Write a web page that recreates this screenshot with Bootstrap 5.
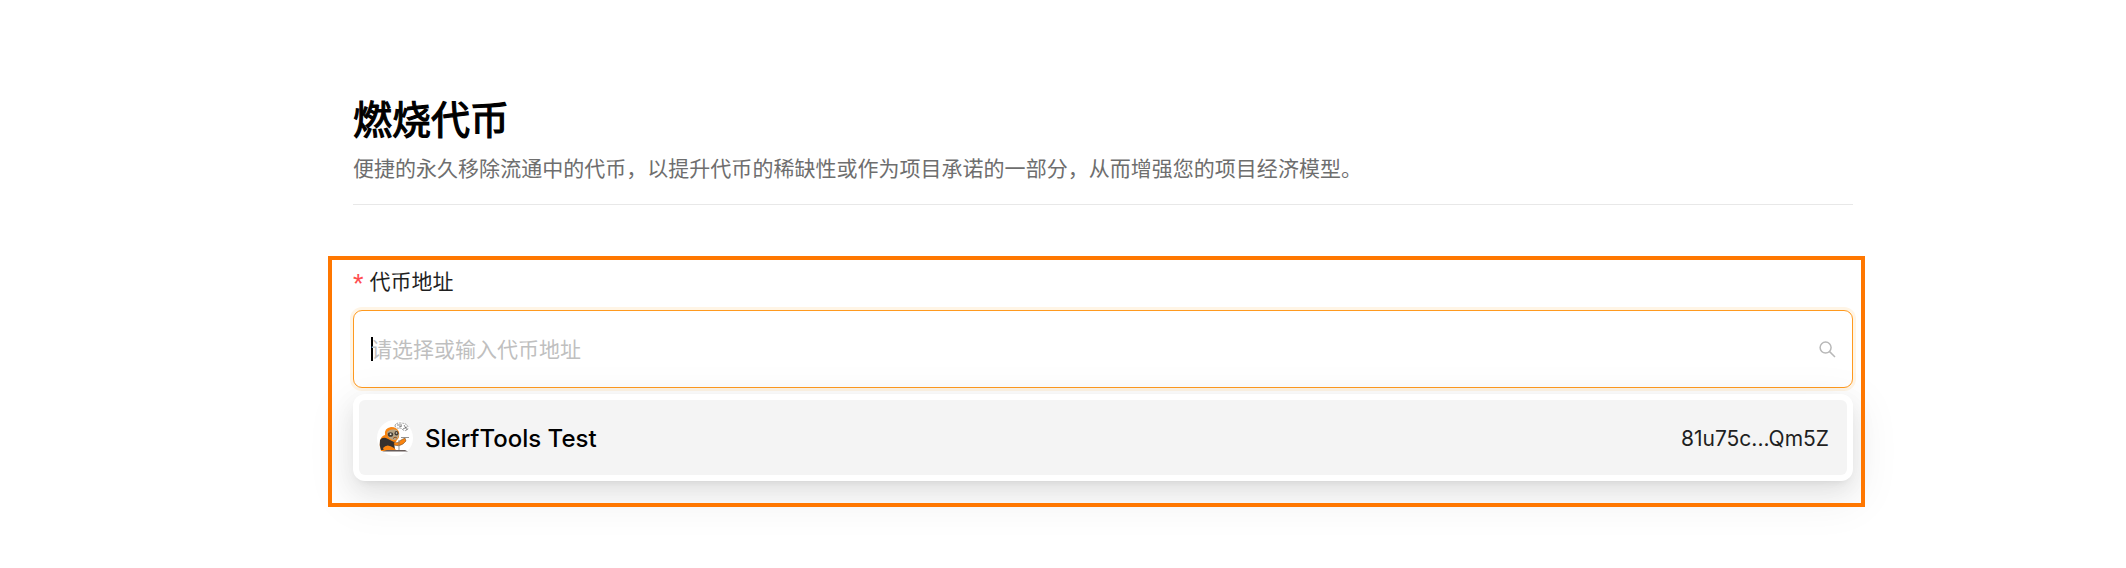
<!DOCTYPE html>
<html lang="zh-CN">
<head>
<meta charset="utf-8">
<meta name="viewport" content="width=device-width, initial-scale=1">
<title>燃烧代币</title>
<link href="https://cdn.jsdelivr.net/npm/bootstrap@5.3.0/dist/css/bootstrap.min.css" rel="stylesheet">
<style>
body { font-family: Inter, "Noto Sans CJK SC", sans-serif; font-size: 21px; line-height: 33px; color: #1f1f1f; background: #fff; height: 568px; overflow: hidden; }
.burn-page { width: 1500px; margin-left: 353px; padding-top: 92px; }
.burn-title { font-size: 39px; line-height: 56px; font-weight: 400; -webkit-text-stroke: 1.2px #000; color: #000; }
.burn-desc { color: #6e6e6e; margin-top: 4px; letter-spacing: .02px; white-space: nowrap; }
.burn-rule { height: 1px; background: #e8e8e8; margin-top: 19px; }
.burn-frame { margin: 51px -12px 0 -25px; padding: 9px 12px 26px 25px; height: 251px; }
.burn-frame::after { content: ""; position: absolute; inset: 0; border: 4px solid #ff7700; pointer-events: none; z-index: 3; }
.burn-label { gap: 6px; height: 33px; }
.burn-star { color: #ff4d4f; font-family: "Liberation Sans", sans-serif; font-size: 27px; padding-top: 6px; }
.token-input { height: 78px; margin-top: 12px; border: 1px solid #ff9a1f; border-radius: 9px; background: #fff; box-shadow: 0 0 0 3px #fff5e6; padding: 0 16px 0 17px; color: #bfbfbf; }
.token-caret { width: 2px; height: 24px; background: #000; margin-right: -2px; }
.token-menu { margin-top: 6px; height: 87px; padding: 6px; border-radius: 12px; background: #fff; box-shadow: 0 9px 24px rgba(0,0,0,.08), 0 4.5px 9px -6px rgba(0,0,0,.12), 0 13.5px 42px 12px rgba(0,0,0,.05); }
.token-option { height: 75px; border-radius: 6px; background: #f4f4f4; padding: 0 18px; }
.token-name { font-size: 24px; font-weight: 500; color: #000; margin-left: 12px; padding-top: 1px; }
.token-addr { padding-top: 2px; }
</style>
</head>
<body>
<main class="burn-page">
  <h1 class="burn-title mb-0">燃烧代币</h1>
  <p class="burn-desc mb-0">便捷的永久移除流通中的代币，以提升代币的稀缺性或作为项目承诺的一部分，从而增强您的项目经济模型。</p>
  <div class="burn-rule"></div>
  <section class="burn-frame position-relative">
    <div class="burn-label d-flex align-items-center"><span class="burn-star">*</span><span>代币地址</span></div>
    <div class="token-input d-flex align-items-center">
      <span class="token-caret"></span>
      <span class="flex-grow-1">请选择或输入代币地址</span>
      <svg width="17" height="17" viewBox="0 0 17 17" fill="none" stroke="#b8b8b8" stroke-width="1.5"><circle cx="6.6" cy="6.6" r="5.5"/><path d="M10.6 10.6 16 16"/></svg>
    </div>
    <div class="token-menu position-relative">
      <div class="token-option d-flex align-items-center">
        <svg width="36" height="36" viewBox="0 0 36 36">
          <circle cx="18" cy="18" r="18" fill="#fff"/>
          <path d="M3 21Q4 16 8 15Q7 8 14 7Q20 7 22 12Q23 17 20 20L16 26L17 31H4Q2 26 3 21Z" fill="#f98410"/>
          <path d="M3 20Q6 16 11 19L17 22L18 30H4Q2 25 3 20Z" fill="#34302e"/>
          <path d="M6 28Q10 23 17 28L20 31H7Z" fill="#f98410"/>
          <path d="M17 22Q21 24 24 20L28 18L29 21L26 24Q22 27 17 25Z" fill="#f98410" stroke="#60401f" stroke-width=".5"/>
          <path d="M10 12Q14 8 20 10L22 15Q21 20 17 20Q11 20 10 12Z" fill="#b7a586"/>
          <ellipse cx="13.5" cy="14.5" rx="2.7" ry="2.3" fill="#433c34"/><ellipse cx="19.5" cy="13.2" rx="2" ry="2.2" fill="#433c34"/>
          <circle cx="13.6" cy="14.2" r=".9" fill="#e9e4d8"/><circle cx="19.5" cy="13" r=".8" fill="#e9e4d8"/>
          <path d="M16 18.5Q18 16 20 18" stroke="#9b4f18" fill="none"/>
          <path d="M18 6Q18 3 23 3Q30 3 31 7Q31 12 26 10L24 8Q19 9 18 6Z" fill="#fff" stroke="#777" stroke-width=".7" stroke-dasharray="2 .8"/>
          <path d="M20 5h5m1 4 4-2m-3-2 3 5M22 7l3-1" stroke="#555" stroke-width=".7"/>
          <path d="M24 17.5H32M22 20V30" stroke="#777" stroke-width=".8"/>
          <path d="M5 31.5 10 30H28L31 31.5Z" fill="#665b59"/>
        </svg>
        <span class="token-name flex-grow-1">SlerfTools Test</span>
        <span class="token-addr">81u75c...Qm5Z</span>
      </div>
    </div>
  </section>
</main>
<script src="https://cdn.jsdelivr.net/npm/bootstrap@5.3.0/dist/js/bootstrap.bundle.min.js"></script>
</body>
</html>
